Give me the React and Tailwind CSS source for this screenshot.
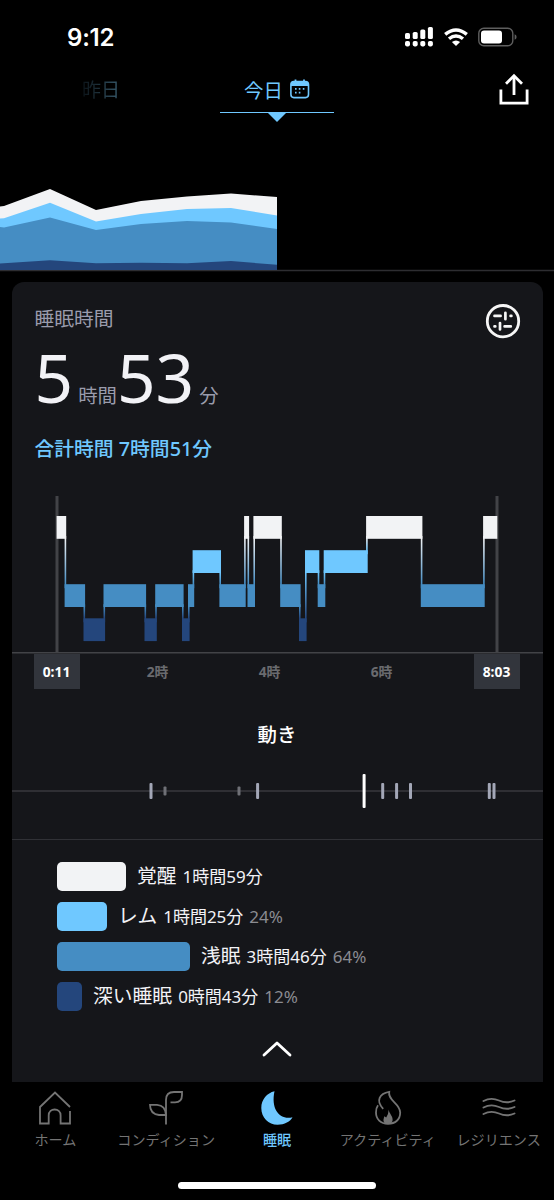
const STAGES = {
  awake: { y: 516, color: '#f2f3f5' },
  rem: { y: 550.2, color: '#6fc8ff' },
  light: { y: 584.2, color: '#458dc3' },
  deep: { y: 618.3, color: '#24467c' },
}

// [start x, stage]; every block runs to the start of the next one
const NIGHT = [
  [57.4, 'awake'], [65.4, 'light'], [84.3, 'deep'], [104.3, 'light'], [145.3, 'deep'],
  [156, 'light'], [182.8, 'deep'], [188.8, 'light'], [193.4, 'rem'], [220.2, 'light'],
  [244.9, 'awake'], [248.3, 'light'], [254.2, 'awake'], [281, 'light'], [299.8, 'deep'],
  [305.8, 'rem'], [318.5, 'light'], [324.5, 'rem'], [366.9, 'awake'], [421.6, 'light'],
  [483.9, 'awake'],
]
const NIGHT_END = 496.5

const MOVES = [
  [151, 16, '#a3a7b7'], [165, 9, '#6f7076'], [239, 9, '#6f7076'], [257.6, 16, '#a3a7b7'],
  [364.1, 34, '#ffffff'], [382.7, 16, '#a3a7b7'], [396.6, 16, '#a3a7b7'], [410.5, 16, '#a3a7b7'],
  [489.3, 16, '#a3a7b7'], [494, 16, '#a3a7b7'],
]

const LEGEND = [
  { name: '覚醒', time: '1時間59分', bar: 'w-[69px] bg-[#f2f3f5]' },
  { name: 'レム', time: '1時間25分', pct: '24%', bar: 'w-[50px] bg-[#6fc8ff]' },
  { name: '浅眠', time: '3時間46分', pct: '64%', bar: 'w-[133px] bg-[#458dc3]' },
  { name: '深い睡眠', time: '0時間43分', pct: '12%', bar: 'w-[25px] bg-[#24467c]' },
]

function StatusBar() {
  return (
    <div className="flex h-[72px] items-center justify-between pl-[67px] pr-[37px] pt-[2px]">
      <span className="mt-px font-['Inter'] text-[24px] font-semibold leading-none tracking-[-0.2px]">9:12</span>
      <div className="flex items-center gap-[10px]">
        <svg width="29" height="20" viewBox="0 0 29 20" fill="#fff">
          <rect x="0" y="6" width="5" height="6" rx="1.6" />
          <rect x="7.7" y="5" width="5" height="7" rx="1.6" />
          <rect x="15.3" y="2.5" width="5" height="9.5" rx="1.6" />
          <rect x="22.9" y="0" width="5" height="12" rx="1.6" />
          {[0, 7.7, 15.3, 22.9].map((x) => (
            <rect key={x} x={x} y="14" width="5" height="5.4" rx="1.8" />
          ))}
        </svg>
        <svg width="24" height="18" viewBox="0 0 24 18" fill="none" stroke="#fff" strokeWidth="3.4">
          <path d="M1.2 6.4Q12 -2.6 22.8 6.4" />
          <path d="M5 10.8Q12 5 19 10.8" />
          <path d="M12 18L7.9 14Q12 10.8 16.1 14Z" fill="#fff" stroke="none" />
        </svg>
        <svg width="39" height="20" viewBox="0 0 39 20">
          <rect x="0.8" y="1.3" width="34" height="17.4" rx="5" fill="none" stroke="#5e5e5e" strokeWidth="1.4" />
          <rect x="3" y="3.6" width="21" height="12.8" rx="3" fill="#fff" />
          <path d="M36.6 7.3Q38.6 8 38.6 10T36.6 12.7Z" fill="#5e5e5e" />
        </svg>
      </div>
    </div>
  )
}

function DayTabs() {
  return (
    <div className="grid h-[50px] grid-cols-[220px_114px_1fr] text-[19px] leading-[37px]">
      <div className="pl-[82px]">
        <span className="bg-linear-to-r from-[#0b1318] to-[#37596b] bg-clip-text text-transparent">昨日</span>
      </div>
      <div className="flex flex-col items-center text-[#6fc8ff]">
        <div className="flex h-[40.5px] w-full justify-center gap-[7px] border-b-[1.5px] border-[#6fc8ff]">
          <span className="text-[19.4px] leading-[38px]">今日</span>
          <svg className="mt-[7px]" width="20" height="20" viewBox="0 0 20 20">
            <path d="M5.5 0.5V4M14 0.5V4" stroke="currentColor" strokeWidth="1.8" />
            <rect x="0.9" y="2.6" width="17.6" height="16" rx="3" fill="none" stroke="currentColor" strokeWidth="1.6" />
            <path d="M1 7V5Q1 2.5 4 2.5H15.5Q18.5 2.5 18.5 5V7Z" fill="currentColor" />
            <path d="M5 9.9H6.6M8.8 9.9H10.4M12.8 9.9H14.4M5 13.6H6.6M8.8 13.6H10.4" stroke="currentColor" strokeWidth="1.7" />
          </svg>
        </div>
        <svg width="18" height="10" viewBox="0 0 18 10">
          <path d="M0 0H18L9 9Z" fill="currentColor" />
        </svg>
      </div>
      <div className="flex justify-end pr-[25px] pt-px">
        <svg width="30" height="32" viewBox="0 0 30 32" fill="none" stroke="#fff" strokeWidth="2.8">
          <path d="M1.9 16.5V30.2H28.1V16.5M15 22V3" />
          <path d="M7 10.8L15 2.8L23 10.8" />
        </svg>
      </div>
    </div>
  )
}

function TrendChart() {
  return (
    <svg className="block" width="554" height="150" viewBox="0 122 554 150">
      <path d="M0 270.5H554" stroke="#2d2d31" strokeWidth="1.6" />
      <path d="M0 206.5L4 206L50 189L96 210L141 201L187 196.5L231 193.5L277 197V270H0Z" fill="#f2f3f5" />
      <path d="M0 218.5L4 218.3L50 202.8L96 221.5L141 214L187 209L231 208L277 215.5V270H0Z" fill="#6fc8ff" />
      <path d="M0 227L4 227.5L50 217.5L96 230L141 224L187 221L231 222.5L277 229V270H0Z" fill="#458dc3" />
      <path d="M0 263.5L50 260.3L96 263.2L141 262.8L187 263.3L231 261L277 264.8V270H0Z" fill="#24467c" />
    </svg>
  )
}

function Hypnogram() {
  return (
    <svg className="block" width="531" height="160" viewBox="12 494 531 160">
      <defs>
        {NIGHT.slice(1).map(([x, stage], i) => {
          const prev = STAGES[NIGHT[i][1]]
          const cur = STAGES[stage]
          const [top, bottom] = prev.y < cur.y ? [prev, cur] : [cur, prev]
          return (
            <linearGradient key={x} id={`join-${i}`} gradientUnits="userSpaceOnUse" x1="0" x2="0" y1={top.y + 22} y2={bottom.y}>
              <stop offset="0" stopColor={top.color} />
              <stop offset="1" stopColor={bottom.color} />
            </linearGradient>
          )
        })}
      </defs>
      <path d="M57 496V652M497 496V652" stroke="#424347" strokeWidth="3" />
      <path d="M12 652.7H543" stroke="#424347" strokeWidth="1.6" />
      {NIGHT.slice(1).map(([x, stage], i) => {
        const a = STAGES[NIGHT[i][1]].y
        const b = STAGES[stage].y
        return <rect key={x} x={x - 0.8} y={Math.min(a, b) + 20} width="1.6" height={Math.abs(a - b) - 16} fill={`url(#join-${i})`} />
      })}
      {NIGHT.map(([x, stage], i) => {
        const end = i + 1 < NIGHT.length ? NIGHT[i + 1][0] : NIGHT_END
        return <rect key={x} x={x - 0.8} y={STAGES[stage].y} width={end - x + 1.6} height="22.8" fill={STAGES[stage].color} />
      })}
    </svg>
  )
}

function TimeAxis() {
  return (
    <div className="flex h-[35px] pl-[22px] pr-[23px] text-center text-[13.8px] font-bold leading-[35px] text-[#6a6b6f]">
      <span className="w-[46px] bg-[#32353c] text-white">0:11</span>
      <div className="ml-[22px] grid w-[336px] grid-cols-3">
        <span>2時</span>
        <span>4時</span>
        <span>6時</span>
      </div>
      <span className="ml-auto w-[46px] bg-[#32353c] text-white">8:03</span>
    </div>
  )
}

function Movement() {
  return (
    <svg className="block" width="531" height="40" viewBox="12 771 531 40">
      <path d="M12 791H543" stroke="#38393e" strokeWidth="1.6" />
      {MOVES.map(([x, h, color]) => (
        <rect key={x} x={x - 1.5} y={791 - h / 2} width="3" height={h} rx="1" fill={color} />
      ))}
    </svg>
  )
}

function SleepCard() {
  return (
    <main className="mx-[11.5px] mt-[10px] flex h-[800px] flex-col rounded-t-[12px] bg-[#15161a]">
      <div className="flex justify-between pl-[23px] pr-[22px] pt-[21px]">
        <h1 className="mt-[2px] text-[19.8px] leading-[28px] text-[#9a9cac]">睡眠時間</h1>
        <svg width="36" height="36" viewBox="0 0 36 36" fill="none" stroke="#f6f6f6" strokeWidth="2.7" strokeLinecap="round">
          <circle cx="18" cy="18.2" r="15.7" strokeWidth="2.8" />
          <path d="M9.5 12.9H15.6M25.6 12.9H26.4M20.4 9.8V16.2" />
          <path d="M9.5 23.4H10.3M15 20V26.4M19.6 23.4H25.8" />
        </svg>
      </div>
      <div className="flex h-[92px] items-baseline pl-[23px] text-[19.4px] text-[#9a9cac]">
        <span className="text-[67.5px] leading-[76px] text-[#f2f2f6]">5</span>
        <span className="ml-[5px]">時間</span>
        <span className="text-[67.5px] leading-[76px] text-[#f2f2f6]">53</span>
        <span className="ml-[5px]">分</span>
      </div>
      <p className="mt-[4px] pl-[23px] text-[19.8px] font-medium leading-[28px] text-[#6fc8ff]">合計時間 7時間51分</p>
      <div className="mt-[31px]">
        <Hypnogram />
        <TimeAxis />
      </div>
      <h2 className="mt-[32px] text-center text-[19.4px] font-medium leading-[28px] text-white">動き</h2>
      <div className="mt-[22px] h-[69px] border-b-[1.5px] border-[#303136]">
        <Movement />
      </div>
      <ul className="mt-[22px] flex flex-col gap-[11.5px] pl-[45.5px]">
        {LEGEND.map((row) => (
          <li key={row.name} className="flex h-[28.5px] items-center">
            <span className={`h-[28.5px] rounded-[5px] ${row.bar}`} />
            <p className="ml-[11px] flex items-baseline text-[17px] leading-[28px] text-[#f2f2f6]">
              <span className="text-[19.8px]">{row.name}</span>
              <span className="ml-[6px]">{row.time}</span>
              {row.pct && <span className="ml-[6px] text-[#8b8c92]">{row.pct}</span>}
            </p>
          </li>
        ))}
      </ul>
      <svg className="mx-auto mt-[29px]" width="30" height="18" viewBox="0 0 30 18" fill="none" stroke="#fff" strokeWidth="2.8" strokeLinecap="round" strokeLinejoin="round">
        <path d="M2 15L15 3L28 15" />
      </svg>
    </main>
  )
}

const HomeIcon = () => (
  <svg width="34" height="36" viewBox="0 0 34 36" fill="none" stroke="currentColor" strokeWidth="1.8">
    <path d="M32 17L17 2.5L2 17V33.5H10.7V25.5C10.7 17.5 22.6 17.5 22.6 25.5V33.5H32V21" />
  </svg>
)

const SproutIcon = () => (
  <svg width="34" height="36" viewBox="0 0 34 36" fill="none" stroke="currentColor" strokeWidth="1.8">
    <path d="M17 34.5V10Q17 2 25 2H33V5Q33 12.3 26 12.3H21.5" />
    <path d="M17 25H10Q1 24 1 14.8H8Q16.5 15.3 17 25Z" />
  </svg>
)

const MoonIcon = () => (
  <svg width="34" height="36" viewBox="0 0 34 36" fill="currentColor">
    <path d="M14.5 1.3C7 3 1.3 9.5 1.3 18C1.3 27.5 8.5 34.8 17.5 34.8C24.5 34.8 30.5 31.5 32.5 27.3C20.5 30.5 10.5 20 14.5 1.3Z" />
  </svg>
)

const FlameIcon = () => (
  <svg width="34" height="36" viewBox="0 0 34 36" fill="none" stroke="currentColor" strokeWidth="1.8">
    <path d="M12.2 18.8C4.5 10.5 8.5 3.5 18.2 1.8C16.5 10.5 29.2 13.5 29.2 22.5C29.2 29.5 24.5 33.8 17 33.8C9.5 33.8 5 29 5 22.5Q5 18 7 15.3" />
    <path d="M17.7 19.5C18 23.5 21.6 25.5 21.6 29.5C21.6 32 20.5 34 17 34C13.5 34 12.3 32 12.5 29.5L13.3 26.3L15.2 27.5Q17.5 24.5 17.7 19.5Z" fill="currentColor" stroke="none" />
  </svg>
)

const WavesIcon = () => (
  <svg width="34" height="36" viewBox="0 0 34 36" fill="none" stroke="currentColor" strokeWidth="1.9" strokeLinecap="round">
    <path d="M1.5 11Q9 7 17 10.5T32.5 10.5M1.5 17.5Q9 13.5 17 17T32.5 17M1.5 24Q9 20 17 23.5T32.5 23.5" />
  </svg>
)

const TABS = [
  { label: 'ホーム', Icon: HomeIcon },
  { label: 'コンディション', Icon: SproutIcon },
  { label: '睡眠', Icon: MoonIcon, active: true },
  { label: 'アクティビティ', Icon: FlameIcon },
  { label: 'レジリエンス', Icon: WavesIcon },
]

function TabBar() {
  return (
    <nav className="grid h-[100px] grid-cols-5 pt-[8px] text-[14.1px] leading-[20px]">
      {TABS.map(({ label, Icon, active }) => (
        <div key={label} className={`flex flex-col items-center gap-[4px] whitespace-nowrap ${active ? 'font-medium text-[#6fc8ff]' : 'text-[#747474]'}`}>
          <Icon />
          <span>{label}</span>
        </div>
      ))}
    </nav>
  )
}

export default function App() {
  return (
    <div className="h-[1200px] w-[554px] overflow-hidden bg-black font-['Noto_Sans','Noto_Sans_CJK_JP',sans-serif] text-white">
      <StatusBar />
      <DayTabs />
      <TrendChart />
      <SleepCard />
      <TabBar />
      <div className="mx-auto h-[7px] w-[198px] rounded-full bg-white" />
    </div>
  )
}
